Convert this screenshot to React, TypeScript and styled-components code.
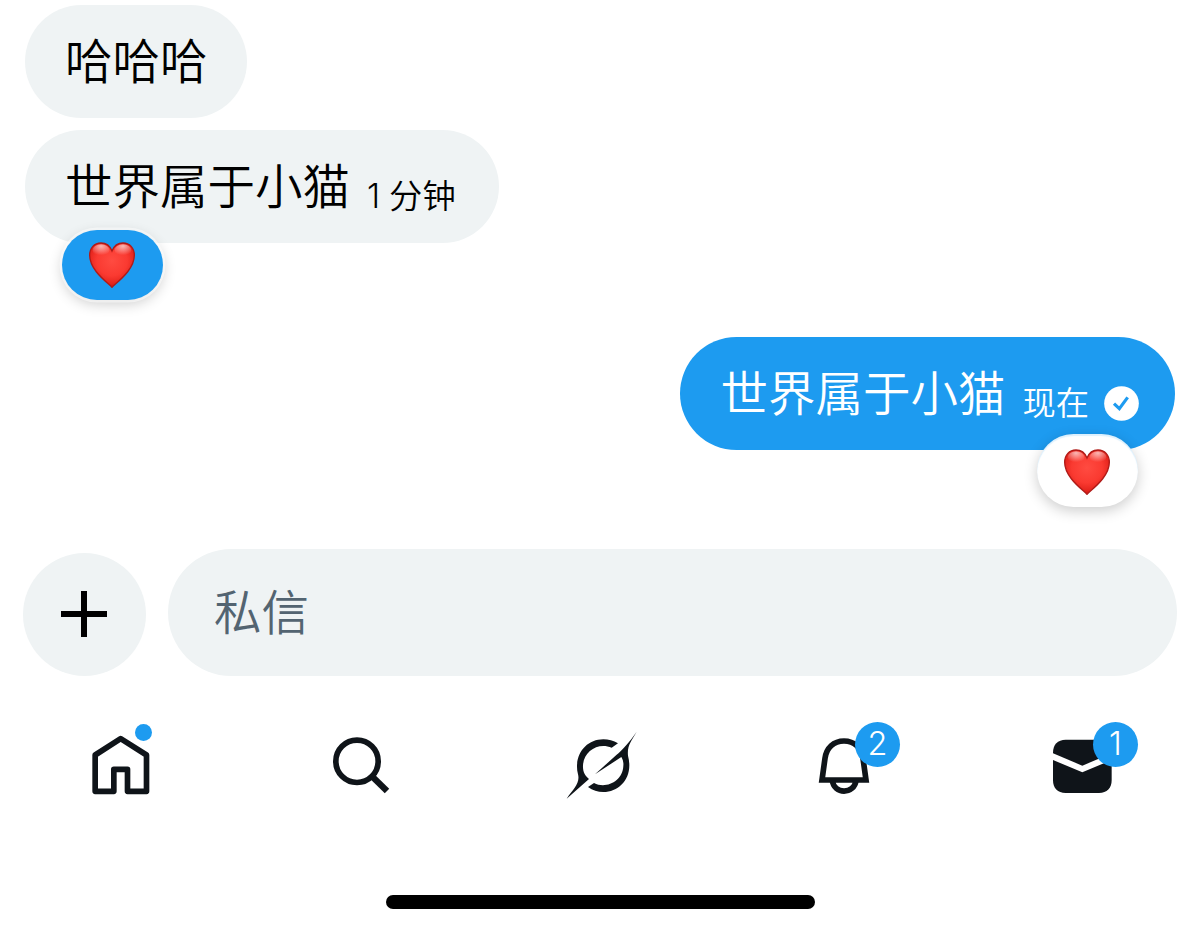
import React from "react";
import styled, { createGlobalStyle } from "styled-components";

const GlobalStyle = createGlobalStyle`
  body {
    margin: 0;
    background: #fff;
    font-family: Inter, "Noto Sans CJK SC", sans-serif;
  }
`;

const Screen = styled.main`
  box-sizing: border-box;
  width: 1200px;
  height: 931px;
  padding-top: 5px;
  display: flex;
  flex-direction: column;
  overflow: hidden;
  background: #fff;
`;

const Conversation = styled.section`
  display: flex;
  flex-direction: column;
  gap: 12px;
  padding: 0 25px;
`;

const Bubble = styled.div<{ $own?: boolean; $end?: number }>`
  position: relative;
  box-sizing: border-box;
  height: 113px;
  padding: 0 ${(p) => p.$end ?? 39}px 0 40px;
  display: flex;
  align-items: center;
  align-self: ${(p) => (p.$own ? "flex-end" : "flex-start")};
  margin-top: ${(p) => (p.$own ? "82px" : "0")};
  border-radius: 57px;
  background: ${(p) => (p.$own ? "#1d9bf0" : "#eff3f4")};
  color: ${(p) => (p.$own ? "#fff" : "#000")};
`;

const Message = styled.span`
  padding-bottom: 5px;
  font-size: 47.5px;
  line-height: 60px;
  font-family: "Noto Sans CJK SC", sans-serif;
  font-weight: 350;
  white-space: nowrap;
`;

const Meta = styled.span`
  display: flex;
  align-items: center;
  gap: 9px;
  margin-left: 17px;
  padding-top: 19px;
  font-size: 33.3px;
  line-height: 40px;
  font-weight: 350;
  white-space: nowrap;
`;

const SentMark = styled.svg`
  width: 35px;
  height: 35px;
  margin-left: 6px;
`;

const Reaction = styled.div<{ $own?: boolean }>`
  position: absolute;
  box-sizing: border-box;
  top: ${(p) => (p.$own ? "97px" : "100px")};
  ${(p) => (p.$own ? "right: 37px;" : "left: 37px;")}
  width: 101px;
  height: ${(p) => (p.$own ? "73px" : "70px")};
  padding: ${(p) => (p.$own ? "2px 1px 0 0" : "0 2px 0 0")};
  display: flex;
  align-items: center;
  justify-content: center;
  border-radius: 37px;
  background: ${(p) => (p.$own ? "#fff" : "#1d9bf0")};
  box-shadow:
    ${(p) => (p.$own ? "inset 0 2px 1px rgba(29, 155, 240, 0.15)" : "0 0 0 2.5px rgba(255, 255, 255, 0.5)")},
    0 4px 14px rgba(0, 0, 0, 0.2);
`;

const Composer = styled.section`
  display: flex;
  align-items: flex-end;
  gap: 22px;
  margin-top: 99px;
  padding: 0 23px;
`;

const AddButton = styled.button`
  width: 123px;
  height: 123px;
  padding: 0 2px 2px 0;
  border: 0;
  border-radius: 50%;
  display: grid;
  place-items: center;
  background: #eff3f4;
`;

const Field = styled.div`
  flex: 1;
  height: 127px;
  display: flex;
  align-items: center;
  padding-left: 46px;
  border-radius: 64px;
  background: #eff3f4;
  color: #536471;
`;

const Nav = styled.nav`
  display: grid;
  grid-template-columns: repeat(5, 240px);
  justify-items: center;
  margin-top: 34px;
`;

const Tab = styled.div<{ $width?: number }>`
  position: relative;
  width: ${(p) => p.$width ?? 100}px;
  height: 100px;
  color: #0f1419;

  svg {
    display: block;
    width: 100%;
    height: 100%;
  }
`;

const Dot = styled.span`
  position: absolute;
  left: 64.5px;
  top: 14px;
  width: 17px;
  height: 17px;
  border-radius: 50%;
  background: #1d9bf0;
`;

const Badge = styled.span<{ $left: number }>`
  position: absolute;
  left: ${(p) => p.$left}px;
  top: 11.5px;
  width: 45px;
  height: 45px;
  border-radius: 50%;
  background: #1d9bf0;
  color: #fff;
  font-size: 32.5px;
  font-weight: 350;
  line-height: 44px;
  text-align: center;
`;

const HomeIndicator = styled.div`
  width: 429px;
  height: 14px;
  margin: 85px 0 0 386px;
  border-radius: 7px;
  background: #000;
`;

function Heart({ id }: { id: string }) {
  return (
    <svg width="46" height="46" viewBox="0 0 138 138" role="img" aria-label="heart">
      <defs>
        <radialGradient id={`${id}-fill`} cx="0.5" cy="0.4" r="0.62">
          <stop offset="0" stopColor="#ff4b41" />
          <stop offset="0.55" stopColor="#fa3a31" />
          <stop offset="0.85" stopColor="#e3231c" />
          <stop offset="1" stopColor="#bd100d" />
        </radialGradient>
        <radialGradient id={`${id}-shine`} cx="0.5" cy="0.15" r="0.75">
          <stop offset="0" stopColor="#fff" stopOpacity="0.65" />
          <stop offset="1" stopColor="#fff" stopOpacity="0" />
        </radialGradient>
      </defs>
      <path
        d="M69 136C58 123 2 86 2 40C2 18 16 3 36 3C52 3 63 12 69 27C75 12 86 3 102 3C122 3 136 18 136 40C136 86 80 123 69 136Z"
        fill={`url(#${id}-fill)`}
        stroke="#b01a17"
        strokeWidth="4"
      />
      <ellipse cx="36" cy="25" rx="25" ry="18" fill={`url(#${id}-shine)`} />
      <ellipse cx="102" cy="25" rx="25" ry="18" fill={`url(#${id}-shine)`} />
    </svg>
  );
}

export default function App() {
  return (
    <>
      <GlobalStyle />
      <Screen>
        <Conversation>
          <Bubble>
            <Message>哈哈哈</Message>
          </Bubble>
          <Bubble $end={43}>
            <Message>世界属于小猫</Message>
            <Meta>
              <span>1</span>
              <span>分钟</span>
            </Meta>
            <Reaction>
              <Heart id="received" />
            </Reaction>
          </Bubble>
          <Bubble $own $end={36}>
            <Message>世界属于小猫</Message>
            <Meta>
              现在
              <SentMark viewBox="0 0 105 105">
                <circle cx="52.5" cy="52.5" r="52" fill="#fff" />
                <path d="M30 53L46 68L71 34" fill="none" stroke="#1d9bf0" strokeWidth="9.5" />
              </SentMark>
            </Meta>
            <Reaction $own>
              <Heart id="sent" />
            </Reaction>
          </Bubble>
        </Conversation>

        <Composer>
          <AddButton aria-label="add">
            <svg width="46" height="46" viewBox="0 0 46 46">
              <path d="M23 0V46M0 23H46" stroke="#000" strokeWidth="6" />
            </svg>
          </AddButton>
          <Field>
            <Message>私信</Message>
          </Field>
        </Composer>

        <Nav>
          <Tab>
            <svg viewBox="0 0 300 300" fill="none" stroke="currentColor" strokeWidth="17" strokeLinejoin="round">
              <path d="M75.5 135L152 86L229.500 135V244H172.500V178H131.500V244H75.500Z" />
            </svg>
            <Dot />
          </Tab>
          <Tab>
            <svg viewBox="0 0 300 300" fill="none" stroke="currentColor" strokeWidth="17">
              <circle cx="141" cy="154" r="63.500" />
              <path d="M185 198L231 243" strokeWidth="19" />
            </svg>
          </Tab>
          <Tab>
            <svg viewBox="-15 -15 300 300" fill="currentColor">
              <path d="M35 251C55 222 76 205 69 178C55 123 91 73 145 73C160 73 176 77 189 85L170 98C130 81 86 108 84 151C83 171 90 182 102 192Z" />
              <path d="M120 178L184 120C201 106 222 83 245 50C229 79 216 91 219 122C236 185 196 231 145 231C128 231 113 226 99 216L117 204C153 223 203 199 205 153C206 143 204 134 199 126Z" />
            </svg>
          </Tab>
          <Tab $width={120}>
            <svg viewBox="-60 0 360 300" fill="none" stroke="currentColor" strokeWidth="17">
              <path d="M66 210H198L189 145C185 114 163 93 132 93C101 93 79 114 75 145Z" />
              <path d="M97 211C101 254 163 254 168 211" />
            </svg>
            <Badge $left={75}>2</Badge>
          </Tab>
          <Tab $width={120}>
            <svg viewBox="-45 0 360 300" fill="currentColor">
              <path d="M54 130V128C54 104 68 89 92 89H192C216 89 230 104 230 128V130L142 167Z" />
              <path d="M54 150L142 187L230 150V211C230 235 216 249 192 249H92C68 249 54 235 54 211Z" />
            </svg>
            <Badge $left={73}>1</Badge>
          </Tab>
        </Nav>

        <HomeIndicator />
      </Screen>
    </>
  );
}
